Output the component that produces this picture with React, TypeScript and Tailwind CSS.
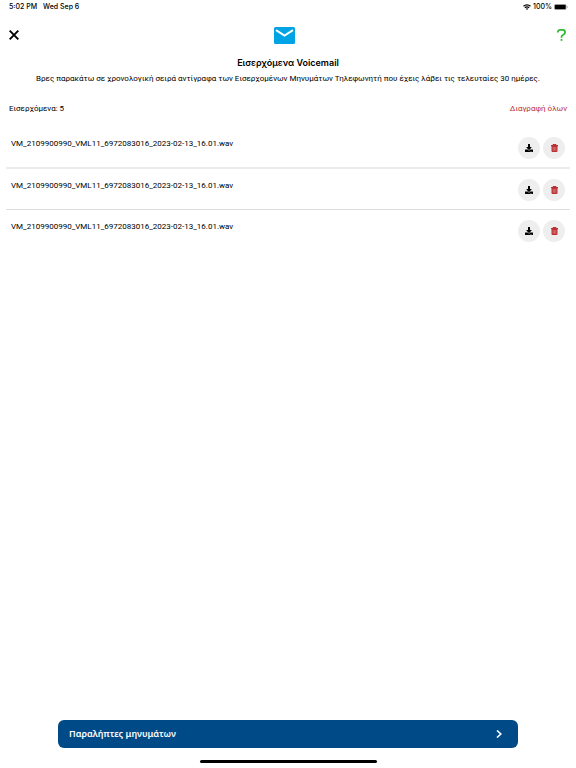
import * as React from "react";
import { FaDownload } from "react-icons/fa";

type Voicemail = {
  id: number;
  file: string;
};

const voicemails: Voicemail[] = [
  { id: 1, file: "VM_2109900990_VML11_6972083016_2023-02-13_16.01.wav" },
  { id: 2, file: "VM_2109900990_VML11_6972083016_2023-02-13_16.01.wav" },
  { id: 3, file: "VM_2109900990_VML11_6972083016_2023-02-13_16.01.wav" },
];

function StatusBar() {
  return (
    <div className="flex h-[14px] items-center justify-between pr-2 pl-[9px] font-['Inter',sans-serif] text-[7px] font-medium">
      <div className="flex gap-[6px]">
        <span>5:02 PM</span>
        <span>Wed Sep 6</span>
      </div>
      <div className="flex items-center gap-[2px]">
        <svg viewBox="0 0 16 12" className="h-[6px] w-2" fill="none" stroke="currentColor" strokeWidth="2.4">
          <path d="M1 4.5a10 10 0 0 1 14 0" />
          <path d="M3.8 7.6a6 6 0 0 1 8.4 0" />
          <path d="M8 12 5.6 9.6a3.4 3.4 0 0 1 4.8 0z" fill="currentColor" stroke="none" />
        </svg>
        <span>100%</span>
        <svg viewBox="0 0 28 12" className="h-[6px] w-[14px]">
          <rect x="0.5" y="0.5" width="24" height="11" rx="3" fill="none" stroke="#777" />
          <rect x="1.5" y="1.5" width="22" height="9" rx="2" fill="#000" />
          <path d="M26 4v4c1.6-.6 1.6-3.4 0-4z" fill="#777" />
        </svg>
      </div>
    </div>
  );
}

function TrashIcon() {
  return (
    <svg viewBox="0 0 14 16" className="h-2 w-[7px]">
      <path d="M4 0h6l1 2h3v2.4H0V2h3z" fill="currentColor" />
      <path d="M1 4h12v10.2c0 1-.8 1.8-1.8 1.8H2.8C1.8 16 1 15.2 1 14.2z" fill="currentColor" />
      <path d="M4.3 6v7.5M7 6v7.5M9.7 6v7.5" stroke="#eeeeee" strokeWidth="1" opacity="0.6" />
    </svg>
  );
}

function VoicemailRow({ item }: { item: Voicemail }) {
  return (
    <li className="flex items-start justify-between border-b border-[#dedede] px-[5px] pt-[10px] pb-2 first:border-b-2 first:border-[#ebebeb] last:border-b-0">
      <span className="text-[8px] leading-[14px]">{item.file}</span>
      <div className="flex gap-[3px]">
        <button aria-label="Λήψη" className="flex size-[22px] items-center justify-center rounded-full bg-[#eeeeee]">
          <FaDownload className="size-2" />
        </button>
        <button aria-label="Διαγραφή" className="flex size-[22px] items-center justify-center rounded-full bg-[#eeeeee] text-[#be3035]">
          <TrashIcon />
        </button>
      </div>
    </li>
  );
}

export default function App() {
  return (
    <div className="flex min-h-screen flex-col bg-white font-['Roboto','Noto_Sans',sans-serif] text-black">
      <StatusBar />
      <header className="flex h-[42px] items-center justify-between px-[9px]">
        <button aria-label="Κλείσιμο" className="flex w-4 justify-start">
          <svg viewBox="0 0 10 10" className="size-[10px]" stroke="currentColor" strokeWidth="1.9">
            <path d="M0.7 0.7 9.3 9.3M9.3 0.7 0.7 9.3" />
          </svg>
        </button>
        <svg viewBox="0 0 21 17" className="h-[17px] w-[21px]">
          <rect width="21" height="17" rx="1.5" fill="#00a4e4" />
          <path d="M2 3.2 10.5 8.5 19 3.2" fill="none" stroke="#fff" strokeWidth="2" />
        </svg>
        <button aria-label="Βοήθεια" className="flex w-6 justify-end pr-[1px]">
          <svg viewBox="0 0 9 12" className="h-3 w-[9px]" fill="none" stroke="#2db82d" strokeWidth="1.8">
            <path d="M0.9 3.6V2.9C0.9 1.6 1.9.9 3.3.9h2.3c1.4 0 2.4.7 2.4 2v.7c0 1.1-.6 1.7-1.7 2.2C5 6.4 4.5 6.8 4.5 7.8V8.7" />
            <path d="M4.5 10v1.8" />
          </svg>
        </button>
      </header>

      <div className="text-center">
        <h1 className="font-['Inter',sans-serif] text-[9px] leading-[14px] font-semibold">Εισερχόμενα Voicemail</h1>
        <p className="mt-[2px] text-[8px] leading-[14px]">
          Βρες παρακάτω σε χρονολογική σειρά αντίγραφα των Εισερχομένων Μηνυμάτων Τηλεφωνητή που έχεις λάβει τις τελευταίες 30 ημέρες.
        </p>
      </div>

      <div className="mt-4 flex items-center justify-between px-[9px] text-[8px] leading-[14px]">
        <span>Εισερχόμενα: 5</span>
        <button className="text-[#be3035]">Διαγραφή όλων</button>
      </div>

      <ul className="mt-[11px] px-[6px]">
        {voicemails.map((item) => (
          <VoicemailRow key={item.id} item={item} />
        ))}
      </ul>

      <footer className="mt-auto px-[58px]">
        <button className="flex h-7 w-full items-center justify-between rounded-[6px] bg-[#004b87] pr-4 pl-[11px] font-['Noto_Sans',sans-serif] text-[9px] font-semibold text-white">
          <span>Παραλήπτες μηνυμάτων</span>
          <svg viewBox="0 0 6 8" className="h-2 w-[6px]" fill="none" stroke="currentColor" strokeWidth="1.6">
            <path d="M1 0.5 4.8 4 1 7.5" />
          </svg>
        </button>
        <div className="mx-auto mt-3 mb-[5px] h-[3px] w-[177px] rounded-full bg-black" />
      </footer>
    </div>
  );
}
